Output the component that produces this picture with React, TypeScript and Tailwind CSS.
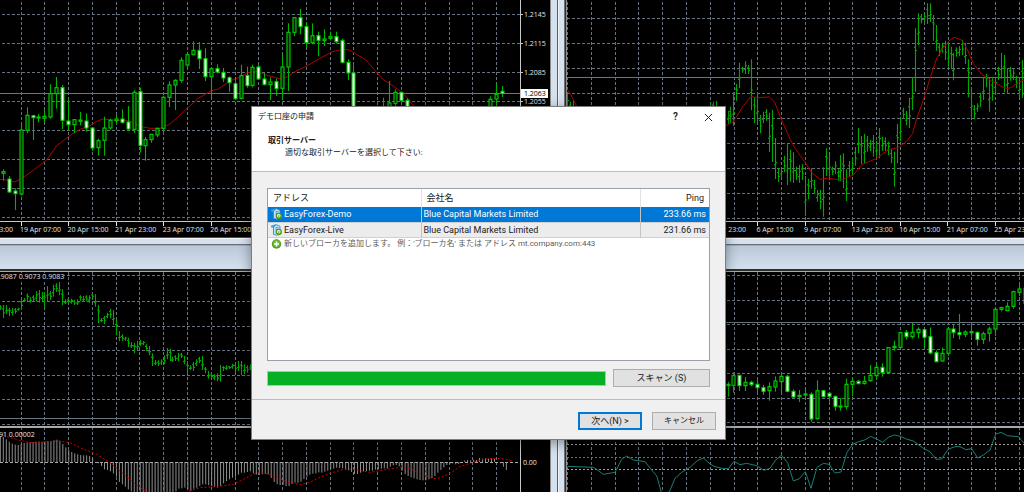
import React from "react";

type Candle = [number, number, number, number, number];
type Range = [number, number];
type Point = [number, number];

/* Chart data is kept in thirds of a pixel: high, low, body top, body bottom, 1 = falling */
const U = 3;

const candlesTopLeft: (Candle | null)[] = [
  [508, 542, 515, 520, 0], [528, 578, 537, 576, 1], [565, 630, 573, 581, 1], [368, 587, 390, 582, 0],
  [322, 400, 346, 391, 0], [346, 420, 347, 353, 1], [342, 367, 351, 353, 0], [330, 368, 349, 355, 0],
  [253, 356, 281, 351, 0], [231, 326, 263, 281, 0], [255, 387, 263, 361, 1], [299, 389, 363, 374, 1],
  [357, 399, 359, 374, 0], [336, 376, 360, 364, 0], [340, 395, 363, 384, 1], [382, 452, 384, 444, 1],
  [416, 467, 422, 443, 0], [350, 467, 384, 421, 0], [356, 389, 361, 384, 0], [345, 372, 357, 362, 0],
  [328, 370, 357, 367, 1], [318, 392, 366, 387, 1], [271, 399, 277, 388, 0], [263, 457, 275, 436, 1],
  [411, 482, 419, 437, 0], [402, 428, 403, 419, 0], [383, 412, 385, 405, 0], [287, 400, 292, 385, 0],
  [244, 321, 255, 292, 0], [238, 330, 241, 255, 0], [172, 248, 181, 241, 0], [155, 210, 164, 195, 0],
  [124, 166, 151, 164, 0], [126, 207, 151, 176, 1], [145, 243, 176, 230, 1], [205, 291, 206, 230, 0],
  [193, 220, 206, 216, 1], [204, 246, 217, 234, 1], [229, 275, 233, 248, 1], [233, 298, 251, 296, 1],
  [194, 298, 227, 295, 0], [200, 263, 226, 257, 1], [194, 262, 202, 256, 0], [195, 240, 201, 237, 1],
  [219, 257, 237, 253, 1], [232, 300, 246, 254, 0], [236, 288, 245, 266, 1], [165, 297, 201, 265, 0],
  [70, 273, 97, 201, 0], [52, 108, 53, 97, 0], [27, 103, 53, 80, 1], [67, 142, 80, 128, 1],
  [70, 133, 107, 128, 0], [95, 169, 107, 121, 1], [88, 138, 117, 122, 0], [95, 121, 110, 115, 0],
  [95, 130, 110, 125, 1], [116, 190, 122, 187, 1], [178, 240, 187, 219, 1], [196, 360, 219, 340, 1],
  null, null, null, null,
  [293, 350, 330, 345, 0], [243, 340, 309, 330, 0], [268, 320, 277, 310, 0], [275, 308, 277, 302, 1],
  [295, 340, 301, 330, 1], null, null, null, null, null, null, null, null, null, null, null, null, null,
  [289, 340, 298, 330, 0], [249, 325, 283, 297, 0], [258, 291, 274, 280, 1],
];

const maTopLeft: Point[] = [
  [0, 538], [20, 540], [45, 546], [63, 536], [80, 525], [100, 511], [140, 480], [170, 437], [205, 410],
  [240, 388], [270, 377], [290, 364], [308, 357], [340, 360], [390, 363], [420, 379], [450, 385],
  [480, 385], [510, 372], [535, 350], [565, 322], [595, 295], [634, 272], [655, 267], [690, 243],
  [723, 230], [741, 218], [768, 214], [798, 225], [838, 236], [863, 230], [888, 213], [918, 199],
  [958, 176], [998, 155], [1028, 148], [1048, 150], [1098, 180], [1148, 238], [1173, 253], [1204, 276],
  [1223, 295], [1243, 320],
];

const barsTopRight: Range[] = [
  [332, 371], [320, 368], [277, 378], [252, 302], [188, 265], [200, 218], [184, 222], [195, 222],
  [178, 331], [292, 369], [279, 372], [345, 400], [335, 370], [327, 362], [338, 456], [330, 486],
  [414, 537], [505, 546], [506, 530], [468, 517], [433, 555], [450, 545], [457, 548], [500, 540],
  [495, 548], [493, 540], [528, 648], [536, 598], [505, 566], [540, 582], [570, 605], [570, 628],
  [502, 650], [445, 528], [463, 530], [500, 525], [484, 522], [508, 542], [465, 543], [460, 565],
  [508, 603], [483, 530], [473, 526], [441, 497], [384, 460], [408, 492], [402, 490], [408, 455],
  [420, 453], [405, 470], [422, 470], [384, 475], [410, 452], [412, 452], [425, 465], [448, 490],
  [455, 560], [372, 490], [350, 424], [323, 357], [333, 376], [293, 384], [232, 330], [85, 275],
  [40, 135], [42, 70], [42, 66], [10, 72], [10, 66], [45, 122], [75, 152], [130, 168], [128, 158],
  [122, 180], [128, 200], [140, 208], [158, 241], [142, 170], [138, 168], [120, 165], [128, 192],
  [178, 292], [262, 355], [315, 358], [310, 335], [278, 320], [232, 300], [222, 262], [232, 335],
  [235, 302], [230, 280], [200, 240], [158, 236], [165, 277], [205, 280], [200, 242], [208, 240],
  [228, 265], [232, 292], [180, 293],
];

const maTopRight: Point[] = [
  [33, 267], [45, 285], [60, 315], [80, 360], [500, 378], [510, 377], [530, 367], [545, 345], [560, 320],
  [585, 290], [605, 293], [640, 291], [655, 305], [677, 360], [702, 417], [717, 445], [747, 487],
  [767, 518], [792, 538], [817, 534], [842, 539], [862, 537], [892, 525], [917, 494], [962, 475],
  [997, 449], [1027, 443], [1052, 424], [1070, 400], [1082, 355], [1102, 300], [1122, 235],
  [1142, 175], [1162, 143], [1182, 120], [1194, 112], [1217, 120], [1232, 145], [1252, 190],
  [1277, 223], [1307, 243], [1342, 262], [1352, 266], [1367, 262], [1387, 247], [1404, 240],
];

const barsBottomLeft: Range[] = [
  [208, 222], [207, 246], [207, 235], [215, 240], [215, 238], [216, 233], [215, 224], [187, 222],
  [186, 198], [172, 199], [184, 200], [178, 196], [166, 196], [162, 200], [168, 198], [168, 213],
  [150, 195], [165, 192], [146, 182], [142, 168], [138, 178], [160, 208], [190, 204], [188, 200],
  [188, 203], [192, 207], [190, 207], [178, 195], [180, 197], [178, 196], [178, 200], [172, 188],
  [175, 212], [206, 262], [246, 258], [240, 264], [230, 247], [218, 247], [222, 266], [252, 298],
  [285, 316], [295, 315], [302, 314], [305, 333], [318, 336], [320, 352], [314, 343], [312, 330],
  [315, 328], [325, 345], [330, 358], [352, 390], [372, 387], [373, 390], [370, 387], [358, 385],
  [336, 370], [338, 375], [362, 378], [358, 375], [350, 376], [350, 366], [360, 385], [375, 415],
  [388, 402], [378, 405], [370, 390], [362, 382], [360, 402], [393, 412], [405, 428], [412, 428],
  [415, 432], [412, 436], [387, 437], [390, 405], [388, 402], [390, 398], [383, 398], [380, 408],
  [375, 405], [375, 418], [385, 415], [388, 410], [385, 402],
];

const histogram: number[] = [
  600, 603, 610, 617, 623, 626, 627, 624, 621, 620, 619, 618, 617, 617, 618, 617, 616, 615, 613, 611,
  614, 624, 634, 642, 648, 652, 655, 657, 658, 658, 660, 665, 678, 682, 690, 700, 702, 706, 712, 722,
  738, 745, 752, 760, 766, 770, 780, 780, 780, 780, 780, 780, 780, 780, 780, 780, 780, 780, 775, 766,
  758, 757, 755, 760, 765, 758, 755, 750, 745, 745, 748, 750, 752, 755, 750, 742, 735, 730, 725, 722,
  716, 710, 710, 708, 706, 712, 716, 717, 715, 714, 715, 726, 738, 744, 747, 747, 750, 750, 744, 740,
  740, 737, 729, 722, 716, 713, 712, 709, 710, 707, 704, 700, 698, 695, 696, 697, 700, 703, 708, 714,
  714, 710, 706, 705, 704, 704, 701, 700, 698, 697, 698, 692, 688, 687, 691, 704, 714, 720, 724, 727,
  730, 732, 733, 733, 730, 726, 720, 710, 702, 694, 687, 684, 682, 685, 684, 680, 674, 672, 673, 671,
  672, 666, 668, 667, 668, 667, 669, 678, 682, 692, 702,
];

const signal: Point[] = [
  [10, 598], [30, 605], [60, 613], [90, 620], [130, 618], [170, 615], [210, 620], [240, 635],
  [290, 655], [330, 680], [360, 705], [400, 740], [440, 768], [500, 786], [560, 768], [600, 755],
  [650, 752], [700, 745], [730, 730], [770, 710], [800, 712], [830, 724], [860, 737], [900, 746],
  [930, 739], [960, 724], [990, 712], [1030, 700], [1060, 700], [1110, 709], [1150, 702], [1200, 694],
  [1230, 698], [1260, 712], [1300, 728], [1320, 726], [1350, 712], [1380, 692], [1410, 682],
  [1450, 670], [1490, 667], [1520, 670], [1535, 674],
];

const candlesBottomRight: Candle[] = [
  [425, 470, 433, 437, 1], [397, 458, 407, 436, 0], [405, 453, 406, 437, 1], [411, 453, 427, 437, 0],
  [422, 438, 427, 434, 1], [417, 458, 433, 443, 1], [435, 465, 443, 454, 1], [427, 482, 440, 452, 0],
  [409, 455, 423, 441, 0], [402, 458, 409, 425, 0], [405, 457, 409, 454, 1], [448, 472, 454, 471, 1],
  [450, 486, 466, 470, 0], [450, 475, 462, 464, 0], [457, 545, 463, 537, 1], [421, 538, 452, 536, 0],
  [450, 472, 452, 470, 1], [457, 485, 460, 469, 1], [467, 512, 469, 499, 1], [474, 512, 498, 501, 0],
  [416, 509, 433, 500, 0], [412, 469, 424, 433, 0], [420, 433, 424, 431, 1], [408, 434, 424, 430, 0],
  [375, 425, 406, 422, 0], [373, 418, 382, 407, 0], [370, 410, 382, 398, 1], [321, 401, 323, 397, 0],
  [302, 332, 319, 323, 0], [275, 325, 278, 322, 0], [270, 299, 277, 290, 1], [249, 296, 277, 290, 0],
  [262, 295, 268, 278, 0], [266, 323, 269, 292, 1], [263, 343, 290, 339, 1], [331, 367, 338, 365, 1],
  [323, 365, 340, 363, 0], [264, 348, 267, 340, 0], [252, 294, 267, 277, 1], [222, 298, 278, 284, 1],
  [271, 291, 276, 283, 0], [252, 290, 275, 278, 0], [275, 317, 277, 298, 1], [275, 312, 281, 298, 0],
  [260, 305, 267, 280, 0], [203, 288, 208, 267, 0], [200, 214, 203, 208, 0], [187, 213, 199, 212, 0],
  [152, 206, 155, 199, 0], [134, 168, 147, 157, 0], [140, 195, 145, 190, 0],
];

const oscillator: Point[] = [
  [-428, 679], [-350, 682], [-340, 688], [-320, 703], [-285, 697], [-265, 658], [-250, 648],
  [-230, 660], [-195, 665], [-175, 690], [-160, 707], [-145, 760], [-122, 756], [-105, 715],
  [-85, 697], [-60, 682], [-38, 662], [-20, 654], [0, 672], [15, 680], [40, 686], [55, 686], [72, 664],
  [90, 674], [110, 670], [140, 677], [162, 691], [180, 685], [197, 660], [214, 646], [233, 668],
  [250, 723], [268, 716], [286, 695], [303, 745], [321, 682], [340, 670], [357, 673], [375, 699],
  [393, 696], [411, 637], [428, 613], [446, 605], [464, 600], [482, 589], [500, 597], [518, 607],
  [535, 592], [553, 585], [571, 589], [589, 597], [610, 603], [640, 625], [660, 635], [678, 658],
  [695, 657], [714, 628], [735, 620], [750, 620], [767, 629], [785, 626], [803, 654], [820, 645],
  [840, 630], [857, 582], [874, 577], [892, 587], [925, 590], [945, 612],
];

const range = (count: number) => Array.from({ length: count }, (_, i) => i);

function Grid(props: { x0: number; cols: number; ys: number[]; left: number; right: number; top: number; bottom: number }) {
  const { x0, cols, ys, left, right, top, bottom } = props;
  return (
    <g stroke="#66727f" strokeWidth="1" strokeDasharray="3 2" shapeRendering="crispEdges">
      {range(cols).map((i) => {
        const x = Math.floor(x0 + i * 23.78) + 0.5;
        return <line key={"v" + i} x1={x} x2={x} y1={top} y2={bottom} />;
      })}
      {ys.map((y) => (
        <line key={"h" + y} x1={left} x2={right} y1={y + 0.5} y2={y + 0.5} />
      ))}
    </g>
  );
}

function Candles({ data, x0, step }: { data: (Candle | null)[]; x0: number; step: number }) {
  return (
    <g stroke="#00d000" strokeWidth="1.1">
      {data.map((c, i) => {
        if (!c) return null;
        const x = Math.floor((x0 + i * step) / U) + 0.5;
        const h = Math.max((c[3] - c[2]) / U, 1);
        return (
          <g key={i}>
            <line x1={x} x2={x} y1={c[0] / U} y2={c[1] / U} stroke="#00b400" />
            <rect x={x - 1.5} y={c[2] / U} width="3" height={h} fill={c[4] ? "#ffffff" : "#002400"} />
          </g>
        );
      })}
    </g>
  );
}

function Bars({ data, x0, step }: { data: Range[]; x0: number; step: number }) {
  const d = data
    .map(([hi, lo], i) => {
      const x = Math.floor((x0 + i * step) / U) + 0.5;
      const open = (hi + (lo - hi) * (i % 2 ? 0.3 : 0.65)) / U;
      const close = (hi + (lo - hi) * (i % 3 ? 0.6 : 0.35)) / U;
      return `M${x} ${hi / U}V${lo / U}M${x - 1.5} ${open}H${x}M${x} ${close}H${x + 1.5}`;
    })
    .join("");
  return <path d={d} stroke="#00a800" strokeWidth="1.1" fill="none" />;
}

function Curve({ points, color, dash }: { points: Point[]; color: string; dash?: string }) {
  return (
    <polyline
      points={points.map(([x, y]) => `${x / U},${y / U}`).join(" ")}
      fill="none"
      stroke={color}
      strokeWidth="1"
      strokeDasharray={dash}
    />
  );
}

function Times({ labels, x0 }: { labels: string[]; x0: number }) {
  return (
    <g fill="#e4e4e4">
      {labels.map((label, i) => {
        const x = x0 + i * 47.56;
        return (
          <g key={label}>
            <rect x={Math.floor(x)} y="222" width="1" height="4" />
            <text x={x - 1} y="232">{label}</text>
          </g>
        );
      })}
    </g>
  );
}

function TopLeftChart() {
  return (
    <svg className="block h-[237px] w-full bg-black font-['Open_Sans','Noto_Sans',sans-serif] text-[7px]" aria-label="EURUSD">
      <Grid x0={21} cols={22} ys={range(8).map((i) => Math.round(14 + i * 29))} left={2} right={520} top={2} bottom={221} />
      <rect x="0" y="93" width="520" height="1" fill="#67757f" />
      <Curve points={maTopLeft} color="#b00000" />
      <Candles data={candlesTopLeft} x0={10} step={17.83} />
      <g fill="#c8c8c8">
        <rect x="520" y="0" width="1" height="222" />
        <rect x="0" y="221" width="521" height="1" />
        {[14, 43, 72, 101].map((y) => <rect key={y} x="520" y={y} width="3" height="1" />)}
      </g>
      <g fill="#e4e4e4">
        <text x="524" y="17">1.2145</text>
        <text x="524" y="46">1.2115</text>
        <text x="524" y="75">1.2085</text>
        <text x="524" y="104">1.2055</text>
      </g>
      <rect x="521" y="89" width="27" height="9" fill="#ffffff" />
      <text x="524" y="96" fill="#000000">1.2063</text>
      <Times x0={21} labels={["19 Apr 07:00", "20 Apr 15:00", "21 Apr 23:00", "23 Apr 07:00", "26 Apr 15:00"]} />
      <text x="13" y="232" textAnchor="end" fill="#e4e4e4">16 Apr 23:00</text>
    </svg>
  );
}

function TopRightChart() {
  return (
    <svg className="block h-[237px] w-full bg-black font-['Open_Sans','Noto_Sans',sans-serif] text-[7px]" aria-label="GBPUSD">
      <g transform="translate(-11 0)">
        <Grid x0={11.6} cols={60} ys={range(9).map((i) => Math.round(18 + i * 25.05))} left={11} right={1400} top={2} bottom={221} />
        <rect x="11" y="77" width="1400" height="1" fill="#67757f" />
        <Bars data={barsTopRight} x0={516} step={8.92} />
        <Bars data={[[281, 340], [305, 340], [300, 340]]} x0={35} step={8.92} />
        <Bars data={[[312, 340], [305, 340], [303, 340]]} x0={463} step={8.92} />
        <Curve points={maTopRight} color="#b00000" />
        <rect x="11" y="221" width="1400" height="1" fill="#c8c8c8" />
        <Times
          x0={154}
          labels={["1 Apr 23:00", "6 Apr 15:00", "9 Apr 07:00", "13 Apr 23:00", "16 Apr 15:00", "21 Apr 07:00", "25 Apr 23:00"]}
        />
      </g>
    </svg>
  );
}

function BottomLeftChart() {
  return (
    <svg className="block h-[220px] w-full bg-black font-['Open_Sans','Noto_Sans',sans-serif] text-[7px]" aria-label="USDCHF">
      <g transform="translate(0 -36)">
        <Grid x0={21} cols={22} ys={[39, 65, 90, 114, 139, 163, 188]} left={2} right={520} top={36} bottom={256} />
        <rect x="0" y="182" width="520" height="1" fill="#67757f" />
        <Bars data={barsBottomLeft} x0={1} step={8.93} />
        <rect x="0" y="190" width="550" height="2" fill="#a9a9a9" />
        <path
          d={histogram.map((y, i) => `M${(1 + i * 8.93) / U} 226V${y / U}`).join("")}
          stroke="#8f8f8f"
          strokeWidth="1"
        />
        <path d="M0 226.500H520" stroke="#a9a9a9" strokeWidth="1" strokeDasharray="3 2" />
        <Curve points={signal} color="#d00000" dash="2 2" />
        <rect x="520" y="36" width="1" height="220" fill="#c8c8c8" />
        <rect x="0" y="37" width="64" height="7" fill="#000000" />
        <g fill="#e4e4e4">
          <text x="-1" y="43">.9087 0.9073 0.9083</text>
          <text x="-1" y="201">91 0.00002</text>
          <text x="523" y="229">0.00</text>
        </g>
      </g>
    </svg>
  );
}

function BottomRightChart() {
  return (
    <svg className="block h-[220px] w-full bg-black" aria-label="USDJPY">
      <g transform="translate(143 -32)">
        <Grid x0={-142.400} cols={60} ys={[35, 60, 84, 109, 133, 158, 182]} left={-143} right={1400} top={32} bottom={252} />
        <rect x="-143" y="82" width="1500" height="1" fill="#67757f" />
        <Candles data={candlesBottomRight} x0={54} step={17.84} />
        <rect x="-143" y="186" width="1500" height="2" fill="#a9a9a9" />
        <g strokeWidth="1" strokeDasharray="2 2">
          <path d="M-143 204.500H1400M-143 229.500H1400" stroke="#a0a0a0" />
          <path d="M-143 217.500H1400" stroke="#66727f" />
        </g>
        <Curve points={oscillator} color="#1a7d78" />
      </g>
    </svg>
  );
}

function WindowFrame() {
  return (
    <div className="flex h-[35px] flex-col" aria-hidden="true">
      <div className="h-px bg-[#4a4a4a]" />
      <div className="h-px bg-[#f4f7fa]" />
      <div className="h-[5px] bg-[#d4e2f0]" />
      <div className="h-px bg-[#6c6c74]" />
      <div className="h-px bg-[#a4abb4]" />
      <div className="grow bg-linear-to-b from-[#bac8d8] to-[#d3e1ef]" />
      <div className="h-[2px] bg-[#2e2e2a]" />
      <div className="h-px bg-[#a9a9a9]" />
    </div>
  );
}

function Splitter() {
  return (
    <div className="flex w-[17px] shrink-0 self-stretch" aria-hidden="true">
      <div className="w-px bg-[#8c8c8c]" />
      <div className="w-[6px] bg-[#d4e2f0]" />
      <div className="w-px bg-[#5c5c60]" />
      <div className="w-px bg-[#f0f4f8]" />
      <div className="w-[5px] bg-[#d4e2f0]" />
      <div className="w-px bg-[#707070]" />
      <div className="w-px bg-[#303030]" />
      <div className="w-px bg-[#8c8c8c]" />
    </div>
  );
}

function ServerIcon() {
  return (
    <svg viewBox="0 0 22 23" className="h-3 w-[11px] shrink-0" aria-hidden="true">
      <path d="M0 3 9 0h3L7 4v17l-3-1V7L0 6z" fill="#3b9fe0" />
      <path d="M5 5 11 1l7 3v15l-7 3-6-2z" fill="#bfe4fa" stroke="#2487cf" strokeWidth="1.600" />
      <path d="M9 7h6M9 11h4" stroke="#2487cf" strokeWidth="1.800" />
      <circle cx="15.500" cy="15.500" r="6.300" fill="#4f9a17" />
      <circle cx="15.500" cy="15" r="3.600" fill="#ffffff" />
      <path d="M13 14.500h5L15.500 18z" fill="#4f9a17" />
    </svg>
  );
}

function AddIcon() {
  return (
    <svg viewBox="0 0 20 20" className="h-[10px] w-[11px] shrink-0" aria-hidden="true">
      <circle cx="10" cy="10" r="9.500" fill="#4f9d1c" />
      <circle cx="10" cy="9" r="7.500" fill="#6bb535" />
      <path d="M10 5v10M5 10h10" stroke="#ffffff" strokeWidth="3.200" />
    </svg>
  );
}

const servers = [
  { name: "EasyForex-Demo", company: "Blue Capital Markets Limited", ping: "233.66 ms", selected: true },
  { name: "EasyForex-Live", company: "Blue Capital Markets Limited", ping: "231.66 ms", selected: false },
];

function ServerTable() {
  return (
    <div className="h-[173px] border border-[#9aa0aa] bg-white">
      <table className="w-full table-fixed border-collapse text-[9px] leading-[14px]">
        <colgroup>
          <col className="w-[153px]" />
          <col />
          <col className="w-[69px]" />
        </colgroup>
        <thead>
          <tr className="h-[18px] text-left">
            <th className="border-r border-[#e2e2e2] px-[5px] font-normal">アドレス</th>
            <th className="border-r border-[#e2e2e2] px-[5px] font-normal">会社名</th>
            <th className="px-[5px] text-right font-normal">Ping</th>
          </tr>
        </thead>
        <tbody>
          {servers.map((s) => (
            <tr
              key={s.name}
              aria-selected={s.selected}
              className={
                s.selected
                  ? "h-[15px] border-b border-[#d0d0d0] bg-[#0078d7] text-white"
                  : "h-[15px] border-b border-[#d0d0d0] bg-[#ececec] text-[#202020]"
              }
            >
              <td className="border-r border-[#c4c4c4] pl-[3px]">
                <div className="flex items-center gap-[2px]">
                  <ServerIcon />
                  {s.name}
                </div>
              </td>
              <td className="border-r border-[#c4c4c4] pl-[2px]">{s.company}</td>
              <td className="pr-[3px] text-right">{s.ping}</td>
            </tr>
          ))}
          <tr className="h-[14px] text-[8px] leading-3 text-[#5c5c5c]">
            <td colSpan={3} className="pl-[3px]">
              <div className="flex items-center gap-[2px] whitespace-pre">
                <AddIcon />
                新しいブローカを追加します。 例：'ブローカ名' または アドレス mt.company.com:443
              </div>
            </td>
          </tr>
        </tbody>
      </table>
    </div>
  );
}

function DemoAccountDialog() {
  return (
    <div
      role="dialog"
      aria-labelledby="dialog-title"
      className="absolute top-[106px] left-[251px] w-[475px] border border-[#7d7d7d] bg-[#f0f0f0] font-['Roboto','Noto_Sans_CJK_JP',sans-serif] text-[9px] leading-3 text-[#202020] shadow-[0_3px_12px_rgba(0,0,0,0.4)]"
    >
      <header className="h-[65px] border-b border-[#bdbdbd] bg-white">
        <div className="flex h-5 items-center pr-3 pl-[6px]">
          <h1 id="dialog-title" className="grow text-[8px]">デモ口座の申請</h1>
          <button type="button" aria-label="ヘルプ" className="mr-[26px] text-[10px] font-semibold">?</button>
          <button type="button" aria-label="閉じる">
            <svg viewBox="0 0 10 10" className="size-[9px]" aria-hidden="true">
              <path d="M1 1l8 8M9 1l-8 8" stroke="#202020" strokeWidth="1.100" />
            </svg>
          </button>
        </div>
        <div className="px-4 pt-2 text-[8px]">
          <h2 className="font-bold">取引サーバー</h2>
          <p className="pl-[17px]">適切な取引サーバーを選択して下さい:</p>
        </div>
      </header>
      <div className="px-[15px] pt-4 pb-3">
        <ServerTable />
        <div className="flex items-center gap-[7px] pt-2">
          <div
            role="progressbar"
            aria-label="スキャン"
            aria-valuenow={100}
            className="h-[15px] grow border border-[#bcbcbc] bg-[#e6e6e6]"
          >
            <div className="h-full w-full bg-[#06b025]" />
          </div>
          <button type="button" className="h-[18px] w-[97px] border border-[#adadad] bg-[#e1e1e1]">
            スキャン (S)
          </button>
        </div>
      </div>
      <footer className="flex justify-end gap-[10px] border-t border-[#bdbdbd] px-[9px] pt-3 pb-[9px]">
        <button type="button" className="h-[18px] w-16 border-2 border-[#0078d7] bg-[#e1e1e1] leading-[14px]">
          次へ(N) &gt;
        </button>
        <button type="button" className="h-[18px] w-16 border border-[#adadad] bg-[#e1e1e1] text-[8px]">
          キャンセル
        </button>
      </footer>
    </div>
  );
}

export default function App() {
  return (
    <main className="relative min-h-screen overflow-hidden bg-black">
      <div className="flex">
        <section className="flex w-[550px] shrink-0 flex-col">
          <TopLeftChart />
          <WindowFrame />
          <BottomLeftChart />
        </section>
        <Splitter />
        <section className="flex min-w-0 grow flex-col">
          <TopRightChart />
          <WindowFrame />
          <BottomRightChart />
        </section>
      </div>
      <DemoAccountDialog />
    </main>
  );
}
